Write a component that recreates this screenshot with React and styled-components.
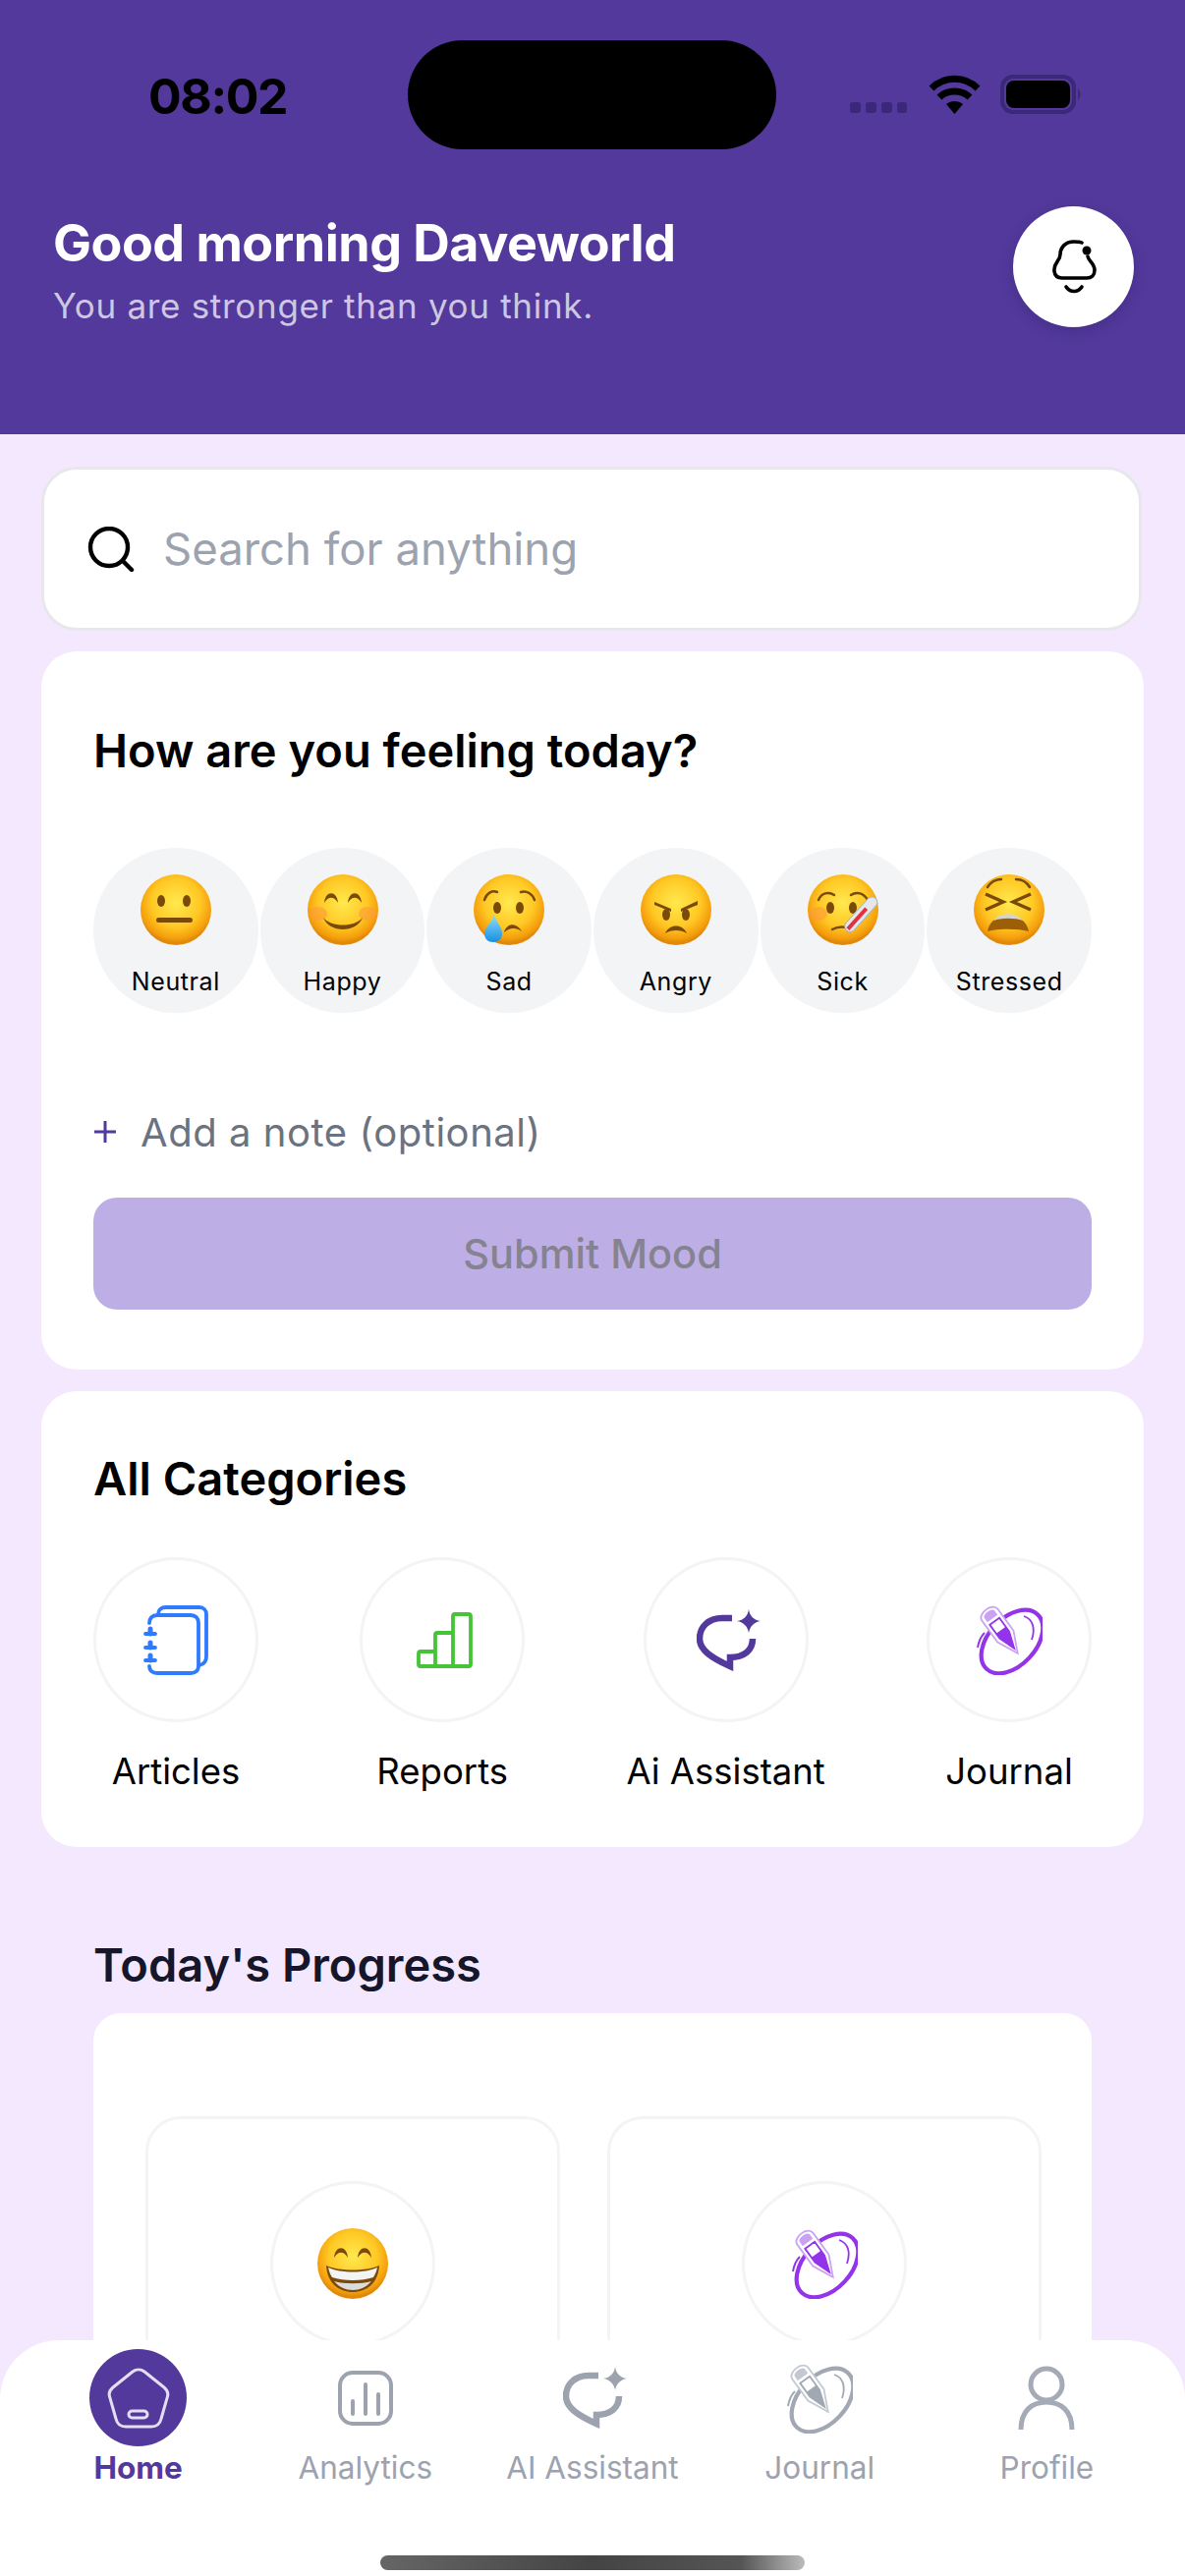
import styled, { createGlobalStyle } from "styled-components";

const GlobalStyle = createGlobalStyle`
  html, body { margin: 0; padding: 0; background: #f4e8fe; }
  * { box-sizing: border-box; }
`;

const Screen = styled.div`
  position: relative;
  width: 1206px;
  height: 2622px;
  overflow: hidden;
  background: #f4e8fe;
  font-family: Inter, "Liberation Sans", sans-serif;
`;

const Header = styled.header`
  height: 442px;
  background: #52399b;
  padding: 41px 52px 0 54px;
`;

const StatusBar = styled.div`
  display: flex;
  align-items: flex-start;
  height: 111px;
`;

const Time = styled.span`
  width: 361px;
  padding: 27px 0 0 97px;
  font-size: 50px;
  line-height: 60px;
  font-weight: 700;
  letter-spacing: -1.4px;
  color: #000;
`;

const Island = styled.div`
  width: 375px;
  height: 111px;
  border-radius: 56px;
  background: #000;
`;

const StatusIcons = styled.svg`
  margin: 35px 0 0 75px;
`;

const Greeting = styled.div`
  display: flex;
  justify-content: space-between;
  align-items: flex-start;
  margin-top: 58px;
`;

const Title = styled.h1`
  margin: 7px 0 0;
  font-size: 52px;
  line-height: 62px;
  font-weight: 700;
  letter-spacing: -0.5px;
  color: #fff;
`;

const Subtitle = styled.p`
  margin: 10px 0 0;
  font-size: 35px;
  line-height: 44px;
  letter-spacing: 0.7px;
  color: rgba(255, 255, 255, 0.72);
`;

const BellButton = styled.div`
  display: flex;
  align-items: center;
  justify-content: center;
  width: 123px;
  height: 123px;
  border-radius: 50%;
  background: #fff;
  box-shadow: 0 4px 14px rgba(40, 20, 90, 0.25);
`;

const Content = styled.main`
  display: flex;
  flex-direction: column;
  padding: 33px 42px 0;
`;

const SearchBar = styled.div`
  display: flex;
  align-items: center;
  gap: 29px;
  width: 1120px;
  height: 167px;
  padding-left: 44px;
  border: 3px solid #e7e7ec;
  border-radius: 36px;
  background: #fff;
  font-size: 45.5px;
  color: #9ca3af;
`;

const Card = styled.section`
  margin-top: ${(p) => p.$gap}px;
  padding: ${(p) => p.$top}px 53px ${(p) => p.$bottom}px;
  border-radius: 36px;
  background: #fff;
`;

const CardTitle = styled.h2`
  margin: 0;
  font-size: 47px;
  line-height: 58px;
  font-weight: 600;
  color: ${(p) => p.$color || "#000"};
`;

const MoodRow = styled.div`
  display: flex;
  gap: 2px;
  margin-top: 70px;
`;

const MoodItem = styled.div`
  display: flex;
  flex-direction: column;
  align-items: center;
  width: 168px;
  height: 168px;
  padding-top: 27px;
  border-radius: 50%;
  background: #f3f4f6;
`;

const MoodLabel = styled.span`
  margin-top: 22px;
  font-size: 25px;
  line-height: 30px;
  letter-spacing: 0.6px;
  color: #000;
`;

const NoteRow = styled.div`
  display: flex;
  align-items: center;
  gap: 24px;
  margin-top: 97px;
  height: 48px;
  font-size: 40px;
  letter-spacing: 0.55px;
  color: #6b7280;
`;

const SubmitButton = styled.div`
  display: flex;
  align-items: center;
  justify-content: center;
  height: 114px;
  margin-top: 43px;
  border-radius: 24px;
  background: #bdaee6;
  font-size: 41.5px;
  font-weight: 500;
  color: #85838f;
`;

const CategoryRow = styled.div`
  display: flex;
  justify-content: space-between;
  margin-top: 51px;
`;

const Category = styled.div`
  display: flex;
  flex-direction: column;
  align-items: center;
  gap: 28px;
  min-width: 168px;
`;

const IconCircle = styled.div`
  display: flex;
  align-items: center;
  justify-content: center;
  width: 168px;
  height: 168px;
  border: 3px solid #f3f4f6;
  border-radius: 50%;
  background: #fff;
`;

const CategoryLabel = styled.span`
  font-size: 36.5px;
  line-height: 44px;
  color: #000;
`;

const ProgressSection = styled.section`
  margin-top: 91px;
  padding: 0 53px;
`;

const ProgressCard = styled.div`
  display: grid;
  grid-template-columns: 422px 442px;
  column-gap: 48px;
  margin-top: 20px;
  padding: 105px 52px 0 53px;
  border-radius: 28px;
  background: #fff;
`;

const ProgressBox = styled.div`
  display: flex;
  justify-content: center;
  height: 420px;
  padding-top: 63px;
  border: 3px solid #f3f4f6;
  border-radius: 36px;
`;

const BottomNav = styled.nav`
  position: absolute;
  left: 0;
  right: 0;
  bottom: 0;
  height: 240px;
  padding: 9px 25px 0;
  border-radius: 60px 60px 0 0;
  background: #fff;
`;

const NavRow = styled.div`
  display: grid;
  grid-template-columns: repeat(5, 1fr);
`;

const NavItem = styled.div`
  display: flex;
  flex-direction: column;
  align-items: center;
  gap: 4px;
`;

const NavIcon = styled.div`
  display: flex;
  align-items: center;
  justify-content: center;
  width: 99px;
  height: 99px;
  border-radius: 50%;
  background: ${(p) => (p.$active ? "#52399b" : "transparent")};
`;

const NavLabel = styled.span`
  font-size: 31.5px;
  line-height: 36px;
  font-weight: ${(p) => (p.$active ? 700 : 400)};
  color: ${(p) => (p.$active ? "#52399b" : "#9ca3af")};
`;

const HomeIndicator = styled.div`
  width: 432px;
  height: 15px;
  margin: 71px auto 0;
  border-radius: 8px;
  background: linear-gradient(90deg, #666 0%, #444 50%, #555 85%, #bbb 100%);
`;

const NudgedIcon = styled.svg`
  margin-left: ${(p) => p.$nudge}px;
`;

function StatusGlyphs() {
  return (
    <StatusIcons width="240" height="50" viewBox="0 0 240 50">
      <rect x="0" y="28" width="11" height="11" rx="3" fill="#3b2878" />
      <rect x="16" y="28" width="11" height="11" rx="3" fill="#3b2878" />
      <rect x="32" y="28" width="11" height="11" rx="3" fill="#3b2878" />
      <rect x="48" y="28" width="10" height="11" rx="3" fill="#3b2878" />
      <g fill="none" stroke="#000" strokeWidth="7">
        <path d="M83 14 C96 1 117 1 130 14" />
        <path d="M91 23 C99 15 114 15 122 23" />
      </g>
      <path d="M98 30 C103 26 110 26 115 30 L106.5 40 Z" fill="#000" />
      <rect x="155" y="2" width="73" height="36" rx="11" fill="none" stroke="#3b2878" strokeWidth="4" />
      <rect x="159" y="6" width="65" height="28" rx="8" fill="#000" />
      <path d="M232 14 C235 16 235 24 232 26 Z" fill="#3b2878" />
    </StatusIcons>
  );
}

function BellIcon() {
  return (
    <svg width="50" height="60" viewBox="0 0 50 60" fill="none" stroke="#000" strokeWidth="3.6" strokeLinecap="round">
      <path d="M33 5 C31 4 29 4 25 4 C16 4 11 10 11 17 C11 24 4 25 5 34 C5.5 39 9 41 13 41 H38 C43 41 46 38 46 33 C46 26 40 24 39 19" />
      <circle cx="38" cy="13" r="4.5" fill="#000" stroke="none" />
      <path d="M17 50 C21 56 29 56 33 50" />
    </svg>
  );
}

function SearchIcon() {
  return (
    <svg width="48" height="46" viewBox="0 0 48 46" fill="none" stroke="#000" strokeWidth="4.4" strokeLinecap="round">
      <circle cx="22" cy="21" r="19" />
      <path d="M36 35 L45 44" />
    </svg>
  );
}

const FACE_COLORS = { brow: "#7a4a08", mouth: "#7a4a08" };

function Face({ id, size = 72, children, blush }) {
  return (
    <svg width={size} height={size} viewBox="0 0 72 72">
      <defs>
        <radialGradient id={id} cx="50%" cy="40%" r="56%">
          <stop offset="0%" stopColor="#ffe94f" />
          <stop offset="62%" stopColor="#ffc824" />
          <stop offset="92%" stopColor="#f49c0a" />
          <stop offset="100%" stopColor="#e08a0c" />
        </radialGradient>
      </defs>
      <circle cx="36" cy="36" r="36" fill={`url(#${id})`} />
      {blush && <ellipse cx="11" cy="40" rx="9" ry="7" fill="#ff9a3c" opacity="0.6" />}
      {blush && blush === "both" && <ellipse cx="61" cy="40" rx="9" ry="7" fill="#ff9a3c" opacity="0.6" />}
      {children}
    </svg>
  );
}

const Eye = ({ x, y = 27 }) => <ellipse cx={x} cy={y} rx="4" ry="6" fill={FACE_COLORS.brow} />;

const Arch = ({ x, y = 29 }) => (
  <path d={`M${x - 7} ${y} C${x - 6} ${y - 13} ${x + 6} ${y - 13} ${x + 7} ${y} C${x + 3} ${y - 7} ${x - 3} ${y - 7} ${x - 7} ${y} Z`} fill={FACE_COLORS.brow} />
);

function MoodFace({ kind }) {
  const c = FACE_COLORS.mouth;
  if (kind === "Neutral") {
    return (
      <Face id="faceNeutral">
        <Eye x={21} />
        <Eye x={47} />
        <rect x="16" y="44" width="37" height="5" rx="2.5" fill={c} />
      </Face>
    );
  }
  if (kind === "Happy") {
    return (
      <Face id="faceHappy" blush="both">
        <Arch x={24} />
        <Arch x={48} />
        <path d="M16 44 C24 54 48 54 56 44 C50 60 22 60 16 44 Z" fill={c} />
      </Face>
    );
  }
  if (kind === "Sad") {
    return (
      <Face id="faceSad">
        <path d="M11 26 C13 19 19 16 24 18" fill="none" stroke={c} strokeWidth="2.5" strokeLinecap="round" />
        <path d="M48 18 C54 16 60 20 62 26" fill="none" stroke={c} strokeWidth="2.5" strokeLinecap="round" />
        <Eye x={24} y={34} />
        <Eye x={47} y={34} />
        <path d="M31 59 C34 49 44 49 49 58 C43 54 37 54 31 59 Z" fill={c} />
        <defs>
          <linearGradient id="tear" x1="0" y1="0" x2="0" y2="1">
            <stop offset="0%" stopColor="#8fdcff" />
            <stop offset="100%" stopColor="#1690e0" />
          </linearGradient>
        </defs>
        <path d="M21 41 C24 50 29 54 29 60 C29 66 25 69 20 69 C15 69 11 66 11 60 C11 54 18 50 21 41 Z" fill="url(#tear)" />
      </Face>
    );
  }
  if (kind === "Angry") {
    return (
      <Face id="faceAngry">
        <path d="M14 28 L31 35 L31 38 L14 31 Z" fill={c} />
        <path d="M58 27 L41 35 L41 38 L58 31 Z" fill={c} />
        <Eye x={26} y={41} />
        <Eye x={46} y={41} />
        <path d="M25 60 C29 50 43 50 47 60 C41 56 31 56 25 60 Z" fill={c} />
      </Face>
    );
  }
  if (kind === "Sick") {
    return (
      <Face id="faceSick" blush="left">
        <path d="M11 26 C14 19 21 17 27 21" fill="none" stroke={c} strokeWidth="2.5" strokeLinecap="round" />
        <path d="M44 21 C50 17 57 19 61 26" fill="none" stroke={c} strokeWidth="2.5" strokeLinecap="round" />
        <Eye x={23} y={34} />
        <Eye x={46} y={34} />
        <path d="M25 56 C31 53 37 53 42 55" fill="none" stroke={c} strokeWidth="2.5" strokeLinecap="round" />
        <g transform="rotate(42 52 44)">
          <rect x="46" y="18" width="11" height="44" rx="5.5" fill="#e4e8ee" stroke="#a9b3be" strokeWidth="1" />
          <rect x="49.5" y="32" width="4" height="28" fill="#e5313c" />
        </g>
      </Face>
    );
  }
  if (kind === "Stressed") {
    return (
      <Face id="faceStressed">
        <path d="M14 13 C18 7 23 5 28 5" fill="none" stroke={c} strokeWidth="2.5" strokeLinecap="round" />
        <path d="M43 5 C49 5 54 8 57 13" fill="none" stroke={c} strokeWidth="2.5" strokeLinecap="round" />
        <path d="M12 20 L30 28 L12 36" fill="none" stroke={c} strokeWidth="3.4" />
        <path d="M58 20 L40 28 L58 36" fill="none" stroke={c} strokeWidth="3.4" />
        <path d="M14 58 C18 36 52 36 56 58 C44 55 26 55 14 58 Z" fill="#9c5f08" />
        <path d="M20 47 C27 38 43 38 50 47 C42 44 28 44 20 47 Z" fill="#d8d4cc" />
      </Face>
    );
  }
  return (
    <Face id="faceGrin">
      <Arch x={24} y={30} />
      <Arch x={48} y={30} />
      <path d="M9 38 C22 44 50 44 63 38 C62 56 50 65 36 65 C22 65 10 56 9 38 Z" fill="#7a4a08" />
      <path d="M11 40 C24 46 48 46 61 40 C60 45 58 48 57 50 C45 54 27 54 15 50 C13 47 12 44 11 40 Z" fill="#f4f4f4" />
      <path d="M17 54 C27 57 45 57 55 54 C50 60 43 63 36 63 C29 63 22 60 17 54 Z" fill="#dcdcdc" />
    </Face>
  );
}

function ArticlesIcon() {
  return (
    <svg width="66" height="71" viewBox="0 0 66 71" fill="none" stroke="#2f7bff" strokeWidth="3.8" strokeLinecap="round">
      <path d="M15 9 C15 5 18 2 23 2 H57 C61 2 64 5 64 9 V52 C64 57 61 60 57 61" />
      <path d="M6 18 C6 13 9 10 14 10 H48 C53 10 56 13 56 18 V62 C56 66 53 69 48 69 H14 C9 69 6 66 6 62" />
      <path d="M2 29 H12 M2 43 H12 M2 56 H12" />
      <path d="M7 24 V29 M7 38 V43 M7 51 V56" strokeWidth="5" />
    </svg>
  );
}

function ReportsIcon() {
  return (
    <NudgedIcon $nudge={4} width="57" height="57" viewBox="0 0 57 57" fill="none" stroke="#46c437" strokeWidth="3.8" strokeLinejoin="round">
      <path d="M19 40 H4 C2.8 40 2 40.8 2 42 V53 C2 54.2 2.8 55 4 55 H53 C54.2 55 55 54.2 55 53 V4 C55 2.8 54.2 2 53 2 H39 C37.8 2 37 2.8 37 4 V21 H21 C19.8 21 19 21.8 19 23 V55 M37 21 V55" />
    </NudgedIcon>
  );
}

function AiIcon({ color, strokeWidth = 6.5 }) {
  return (
    <NudgedIcon $nudge={5} width="65" height="63" viewBox="0 0 65 63" fill="none" stroke={color} strokeWidth={strokeWidth}>
      <path d="M36 9 H26 C12 9 3 18 3 30 C3 41 14 49 34 58 V49 C48 49 57 42 57 30" />
      <path d="M53 0 C54 7 58 11 65 12 C58 13 54 18 53 24 C52 18 48 13 41 12 C48 11 52 7 53 0 Z" fill={color} stroke="none" />
    </NudgedIcon>
  );
}

function JournalIcon({ color, light }) {
  return (
    <svg width="67" height="72" viewBox="0 0 67 72" fill="none">
      <ellipse cx="36" cy="38" rx="38" ry="24" transform="rotate(-47 36 38)" stroke={color} strokeWidth="4.2" />
      <path d="M1 44 C2 38 4 33 8 29" stroke={color} strokeWidth="2" />
      <path d="M48 12 C57 15 60 24 56 36" stroke={color} strokeWidth="1.8" />
      <g transform="translate(10 6) rotate(-36)">
        <path d="M-10 6 C-10 -3 10 -3 10 6 V33 L0 54 L-10 33 Z" fill="#fff" stroke={light} strokeWidth="1.8" />
        <path d="M-7 5 C-7 0 7 0 7 5 V11 H-7 Z" fill={light} stroke="#fff" strokeWidth="1.2" />
        <path d="M-6 14 H6 V31 L0 48 L-6 31 Z" fill="#fff" stroke={color} strokeWidth="1.8" />
        <path d="M-6 25 H6 V31 L0 48 L-6 31 Z" fill={color} />
      </g>
    </svg>
  );
}

function HomeIcon() {
  return (
    <svg width="64" height="62" viewBox="0 0 64 62" fill="none" stroke="#e4def3" strokeWidth="3">
      <path d="M26 4 C29.5 1.3 34.5 1.3 38 4 L58 20 C61 22.5 62.4 25.5 61.6 29 L55 52 C53.8 57 50 60 45 60 H19 C14 60 10.2 57 9 52 L2.4 29 C1.6 25.5 3 22.5 6 20 Z" />
      <rect x="22" y="44" width="19" height="7" rx="3.5" />
    </svg>
  );
}

function AnalyticsIcon() {
  return (
    <svg width="56" height="56" viewBox="0 0 56 56" fill="none" stroke="#9ca3af" strokeWidth="4">
      <rect x="2" y="2" width="52" height="52" rx="13" />
      <path d="M15 31 V44 M28 14 V44 M41 24 V44" strokeLinecap="round" />
    </svg>
  );
}

function ProfileIcon() {
  return (
    <svg width="58" height="66" viewBox="0 0 58 66" fill="none" stroke="#a4aab6" strokeWidth="5">
      <circle cx="29" cy="19" r="16" />
      <path d="M3 65 C3 46 14 37 29 37 C44 37 55 46 55 65" />
    </svg>
  );
}

const moods = ["Neutral", "Happy", "Sad", "Angry", "Sick", "Stressed"];

const categories = [
  { label: "Articles", icon: <ArticlesIcon /> },
  { label: "Reports", icon: <ReportsIcon /> },
  { label: "Ai Assistant", icon: <AiIcon color="#52399b" /> },
  { label: "Journal", icon: <JournalIcon color="#9333ea" light="#c9a2f3" /> },
];

const navItems = [
  { label: "Home", icon: <HomeIcon />, active: true },
  { label: "Analytics", icon: <AnalyticsIcon /> },
  { label: "AI Assistant", icon: <AiIcon color="#9ca3af" /> },
  { label: "Journal", icon: <JournalIcon color="#a1a8b4" light="#c4c8d0" /> },
  { label: "Profile", icon: <ProfileIcon /> },
];

export default function App() {
  return (
    <Screen>
      <GlobalStyle />
      <Header>
        <StatusBar>
          <Time>08:02</Time>
          <Island />
          <StatusGlyphs />
        </StatusBar>
        <Greeting>
          <div>
            <Title>Good morning Daveworld</Title>
            <Subtitle>You are stronger than you think.</Subtitle>
          </div>
          <BellButton>
            <BellIcon />
          </BellButton>
        </Greeting>
      </Header>

      <Content>
        <SearchBar>
          <SearchIcon />
          Search for anything
        </SearchBar>

        <Card $gap={21} $top={72} $bottom={61}>
          <CardTitle>How are you feeling today?</CardTitle>
          <MoodRow>
            {moods.map((m) => (
              <MoodItem key={m}>
                <MoodFace kind={m} />
                <MoodLabel>{m}</MoodLabel>
              </MoodItem>
            ))}
          </MoodRow>
          <NoteRow>
            <svg width="24" height="24" viewBox="0 0 24 24" stroke="#52399b" strokeWidth="3">
              <path d="M12 1 V23 M1 12 H23" />
            </svg>
            Add a note (optional)
          </NoteRow>
          <SubmitButton>Submit Mood</SubmitButton>
        </Card>

        <Card $gap={22} $top={60} $bottom={55}>
          <CardTitle>All Categories</CardTitle>
          <CategoryRow>
            {categories.map((c) => (
              <Category key={c.label}>
                <IconCircle>{c.icon}</IconCircle>
                <CategoryLabel>{c.label}</CategoryLabel>
              </Category>
            ))}
          </CategoryRow>
        </Card>

        <ProgressSection>
          <CardTitle $color="#16162a">Today's Progress</CardTitle>
          <ProgressCard>
            <ProgressBox>
              <IconCircle>
                <MoodFace kind="Grin" />
              </IconCircle>
            </ProgressBox>
            <ProgressBox>
              <IconCircle>
                <JournalIcon color="#9333ea" light="#c9a2f3" />
              </IconCircle>
            </ProgressBox>
          </ProgressCard>
        </ProgressSection>
      </Content>

      <BottomNav>
        <NavRow>
          {navItems.map((n) => (
            <NavItem key={n.label}>
              <NavIcon $active={n.active}>{n.icon}</NavIcon>
              <NavLabel $active={n.active}>{n.label}</NavLabel>
            </NavItem>
          ))}
        </NavRow>
        <HomeIndicator />
      </BottomNav>
    </Screen>
  );
}
